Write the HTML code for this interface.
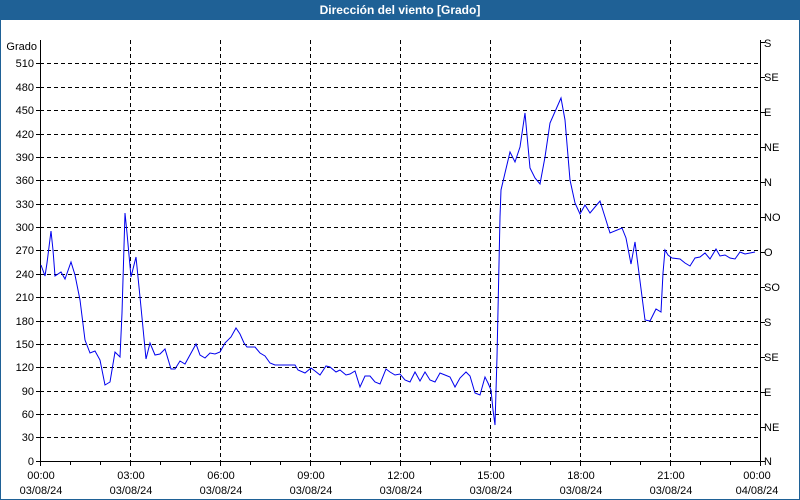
<!DOCTYPE html>
<html><head><meta charset="utf-8"><style>
html,body{margin:0;padding:0;background:#fff}
body{width:800px;height:500px;overflow:hidden;position:relative}
</style></head><body>
<svg width="800" height="500" xmlns="http://www.w3.org/2000/svg" style="position:absolute;left:0;top:0">
<rect x="0" y="0" width="800" height="500" fill="#fff"/>
<rect x="0.5" y="0.5" width="799" height="499" fill="none" stroke="#1f6196"/>
<rect x="0" y="0" width="800" height="20" fill="#1f6196"/>
<text x="400" y="14" fill="#fff" font-family="Liberation Sans, sans-serif" font-size="12" font-weight="bold" text-anchor="middle">Dirección del viento [Grado]</text>
<g stroke="#000" stroke-width="1" stroke-dasharray="4,3" fill="none">
<path d="M40 63.5H760M40 87.5H760M40 110.5H760M40 134.5H760M40 157.5H760M40 180.5H760M40 204.5H760M40 227.5H760M40 250.5H760M40 274.5H760M40 297.5H760M40 321.5H760M40 344.5H760M40 367.5H760M40 391.5H760M40 414.5H760M40 437.5H760"/>
<path d="M130.5 40V461M220.5 40V461M310.5 40V461M400.5 40V461M490.5 40V461M580.5 40V461M670.5 40V461"/>
</g>
<g stroke="#000" stroke-width="1" fill="none">
<path d="M40.5 40V461.5H760.5V40"/>
<path d="M36 63.5H40M36 87.5H40M36 110.5H40M36 134.5H40M36 157.5H40M36 180.5H40M36 204.5H40M36 227.5H40M36 250.5H40M36 274.5H40M36 297.5H40M36 321.5H40M36 344.5H40M36 367.5H40M36 391.5H40M36 414.5H40M36 437.5H40M36 461.5H40"/>
<path d="M760 42.5H765M760 77.5H765M760 112.5H765M760 147.5H765M760 182.5H765M760 217.5H765M760 252.5H765M760 287.5H765M760 322.5H765M760 357.5H765M760 392.5H765M760 427.5H765M760 461.5H765"/>
<path d="M40.5 461V466M70.5 461V465M100.5 461V465M130.5 461V466M160.5 461V465M190.5 461V465M220.5 461V466M250.5 461V465M280.5 461V465M310.5 461V466M340.5 461V465M370.5 461V465M400.5 461V466M430.5 461V465M460.5 461V465M490.5 461V466M520.5 461V465M550.5 461V465M580.5 461V466M610.5 461V465M640.5 461V465M670.5 461V466M700.5 461V465M730.5 461V465M760.5 461V466"/>
</g>
<g font-family="Liberation Sans, sans-serif" font-size="11" fill="#000" text-anchor="end">
<text x="37" y="50">Grado</text>
<text x="34" y="67">510</text><text x="34" y="91">480</text><text x="34" y="114">450</text><text x="34" y="138">420</text><text x="34" y="161">390</text><text x="34" y="184">360</text><text x="34" y="208">330</text><text x="34" y="231">300</text><text x="34" y="254">270</text><text x="34" y="278">240</text><text x="34" y="301">210</text><text x="34" y="325">180</text><text x="34" y="348">150</text><text x="34" y="371">120</text><text x="34" y="395">90</text><text x="34" y="418">60</text><text x="34" y="441">30</text><text x="34" y="465">0</text>
</g>
<g font-family="Liberation Sans, sans-serif" font-size="11" fill="#000">
<text x="764" y="47">S</text><text x="764" y="81">SE</text><text x="764" y="116">E</text><text x="764" y="151">NE</text><text x="764" y="186">N</text><text x="764" y="221">NO</text><text x="764" y="256">O</text><text x="764" y="291">SO</text><text x="764" y="326">S</text><text x="764" y="361">SE</text><text x="764" y="396">E</text><text x="764" y="431">NE</text><text x="764" y="465">N</text>
</g>
<g font-family="Liberation Sans, sans-serif" font-size="11" fill="#000" text-anchor="middle">
<text x="41" y="479">00:00</text><text x="41" y="494">03/08/24</text>
<text x="131" y="479">03:00</text><text x="131" y="494">03/08/24</text>
<text x="221" y="479">06:00</text><text x="221" y="494">03/08/24</text>
<text x="311" y="479">09:00</text><text x="311" y="494">03/08/24</text>
<text x="401" y="479">12:00</text><text x="401" y="494">03/08/24</text>
<text x="491" y="479">15:00</text><text x="491" y="494">03/08/24</text>
<text x="581" y="479">18:00</text><text x="581" y="494">03/08/24</text>
<text x="671" y="479">21:00</text><text x="671" y="494">03/08/24</text>
<text x="757" y="479">00:00</text><text x="757" y="494">04/08/24</text>
</g>
<polyline fill="none" stroke="#0000ee" stroke-width="1" points="41,265 45,276 47,263 51,231 53,250 55,276 61,272 65,279 71,262 75,275 80,300 85,340 90,353 95,351 100,360 105,385 110,382 115,352 120,357 122,313 125,213 127,233 131,277 136,257 140,297 146,359 150,343 155,355 160,354 165,349 171,369 175,369 180,361 185,364 196,344 200,355 205,358 210,353 215,354 220,352 225,343 231,337 236,328 240,334 244,343 247,347 255,347 260,353 265,356 270,363 275,365 295,365 298,370 305,373 311,368 315,371 320,375 326,366 330,367 336,372 340,370 346,375 350,374 355,371 360,387 365,376 370,376 375,382 380,384 386,369 390,372 395,375 400,374 405,380 410,382 415,372 420,381 425,372 430,380 435,382 440,373 445,375 450,377 455,387 460,378 466,372 470,376 475,393 480,395 485,377 488,383 491,390 493,410 495,425 497,357 500,217 501,190 505,173 510,152 515,162 520,147 525,113 530,168 535,178 540,184 545,157 550,123 561,98 565,120 570,180 575,203 580,214 585,205 590,213 600,201 610,233 622,228 626,238 631,264 635,242 645,320 650,321 656,309 661,312 663,273 665,250 668,255 672,258 680,259 685,263 690,266 695,258 700,257 705,253 710,259 716,249 720,256 725,255 730,258 735,259 740,252 745,254 750,253 755,252"/>
</svg>
</body></html>
